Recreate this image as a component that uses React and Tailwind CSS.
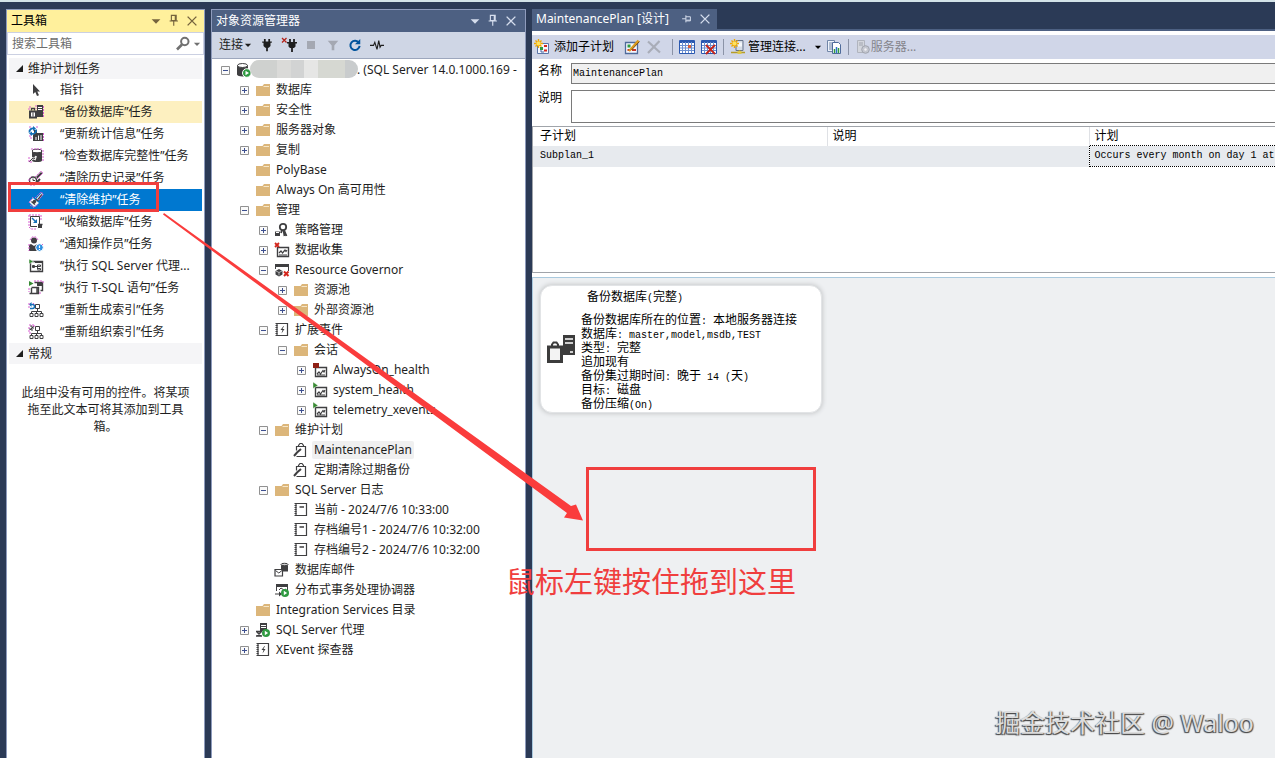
import React from "react";

const D = "#3f3f41";
const M = "#d65fd0";

function Svg({ size = 16, children }) {
  return (
    <svg width={size} height={size} viewBox="0 0 16 16" fill="none" className="shrink-0" aria-hidden="true">
      {children}
    </svg>
  );
}

const Fringe = ({ d }) => <path d={d} stroke={M} strokeWidth="1" strokeDasharray="2 1" />;

const Tree3 = () => (
  <path d="M7.500 2.500h4v4h-4zM9.500 6.500v3M3.500 11.500v-2h10v2M8.500 9.500v2M2 11.500h3v3H2zM7 11.500h3v3H7zM12 11.500h3v3h-3z" stroke={D} />
);

const icons = {
  pointer: <path d="M5 2v10l2.300-2 1.700 4 2-.8-1.700-3.800H12z" fill={D} />,
  backup: (
    <>
      <path d="M9 1h6v12H9z" fill={D} />
      <path d="M10 3.500h4M10 5.500h4" stroke="#fff" />
      <path d="M2 7.500h6v6H2z" fill="#fff" stroke={D} strokeWidth="2" />
      <path d="M3.500 6.500V4.500h3v2" stroke={D} strokeWidth="1.300" />
      <path d="M4.500 8.500h1v4h-1z" fill={D} />
      <Fringe d="M1 6V3h2M8 1v4M15.500 2v11" />
    </>
  ),
  stats: (
    <>
      <path d="M6 7V4h3v3h6v8H5V9" fill={D} />
      <path d="M8 14v-3M10.500 14V9.500M13 14v-5" stroke="#fff" />
      <path d="M1.500 6.500A3.500 3.500 0 0 1 6 2.500M8 3.500a3.500 3.500 0 0 1-5 4" stroke="#1471b8" strokeWidth="1.800" />
      <path d="M5 0l3 2.500L5 5zM4 10L1 7.500 4 5.500z" fill="#1471b8" />
      <Fringe d="M1 1h2M8 1h2M1 10h2v4M15.500 7v8" />
    </>
  ),
  check: (
    <>
      <path d="M4 3.500v9c0 2 10 2 10 0v-9" fill={D} />
      <ellipse cx="9" cy="3" rx="5" ry="1.800" fill="#fff" stroke={D} />
      <path d="M1 14l4-4 2 1 1-3" stroke="#eee" strokeWidth="2" />
      <path d="M1 14l4-4 2 .5" stroke={D} />
      <Fringe d="M3 1h12M1 9v5h4M15 2v12" />
    </>
  ),
  history: (
    <>
      <path d="M8 7l5-5 1.500 1.500-5 5z" fill={D} />
      <circle cx="5" cy="10.500" r="3.500" fill="#fff" stroke={D} strokeWidth="1.400" />
      <path d="M5 8.500v2h2" stroke={D} />
      <path d="M9 12l3-3" stroke={D} strokeWidth="2" />
      <Fringe d="M7 7l6-6 2 2-6 6M1 14V9l3-3M2 15h6l4-4" />
    </>
  ),
  broom: (
    <>
      <path d="M8 7l5.500-6L15 2.500 10 9z" fill="#f5f5f5" />
      <path d="M5 6l6 5-5 4-5-5z" fill="#f5f5f5" />
      <path d="M10 7.500l4-5" stroke={D} strokeWidth="1.300" />
      <path d="M3.500 9.500l3.500 3M8 7l2.500 2" stroke={D} strokeWidth="1.500" />
      <circle cx="6.500" cy="9.500" r="1.800" fill={D} />
      <Fringe d="M7 6l6-6 2.500 2-5 6M1 11l4-6M2 13l4 2.500 4-3" />
    </>
  ),
  shrink: (
    <>
      <path d="M2.500 2.500h9v10h-9z" fill="#fff" stroke={D} />
      <path d="M4 4l4 4" stroke="#1471b8" strokeWidth="1.500" />
      <path d="M9 5v4H5z" fill="#1471b8" />
      <path d="M9.500 10.500h5v4h-5z" fill={D} stroke="#fff" />
      <path d="M10 10.500h4.500" stroke={D} strokeWidth="1.500" />
      <Fringe d="M1 1h12v6M1 1v12l2 2h5" />
    </>
  ),
  operator: (
    <>
      <circle cx="6" cy="4.500" r="3" fill={D} />
      <path d="M1 9l2-1 3 2 3-2 1 1v6H1z" fill={D} />
      <circle cx="11.500" cy="11.500" r="3.800" fill="#2d8fe0" stroke="#fff" />
      <path d="M11.500 9.500v2.500M11.500 13v1" stroke="#fff" strokeWidth="1.200" />
      <Fringe d="M2 4l2-3h4l2 3M1 8V15M14 8l1 1" />
    </>
  ),
  agentJob: (
    <>
      <path d="M2.500 3.500h12v10h-12z" fill="#fff" stroke={D} strokeWidth="1.400" />
      <path d="M7 3h8v2H7z" fill={D} />
      <path d="M4 8.500h5M9.500 7v4.500M9.500 7h3v1.500h-3M9.500 10.500h3V12h-3M4.500 7.500h2v2h-2z" stroke={D} />
      <path d="M1 1l4.500 2.500L1 6z" fill="#388a34" stroke="#fff" strokeWidth=".5" />
    </>
  ),
  tsql: (
    <>
      <path d="M6.500 2.500h8v8h-2" stroke={D} strokeWidth="1.400" />
      <path d="M9 3h6v3H9z" fill={D} />
      <path d="M3.500 7.500h7v6h-7M3.500 13.500V8M9 7v7M1.500 13.500h5" stroke={D} strokeWidth="1.400" />
      <path d="M1 1l4.500 2.500L1 6z" fill="#388a34" />
      <Fringe d="M6 1h9v3M1 8v4M12 14v-3" />
    </>
  ),
  rebuild: (
    <>
      <Tree3 />
      <path d="M2 2.500h2.500a2 2 0 0 1 0 4H2" stroke="#1471b8" strokeWidth="1.500" />
      <path d="M3.500 0L1 2.500 3.500 5z" fill="#1471b8" />
      <Fringe d="M1 1v6M5 1l2 2" />
    </>
  ),
  reorg: (
    <>
      <Tree3 />
      <path d="M2 2h2v2h2M2 6l4-4M1 5h3v2" stroke={D} />
      <Fringe d="M1 1h5M1 3v6h3M6 1v3" />
    </>
  ),
  folder: (
    <>
      <path d="M1 4h6.500L9 2h6v12H1z" fill="#dcb67a" />
      <path d="M8.500 4.500H14" stroke="#f6e6c8" />
    </>
  ),
  server: (
    <>
      <path d="M1 3v9.500C1 15 12 15 12 12.500V3" fill={D} />
      <ellipse cx="6.500" cy="3.500" rx="5" ry="2" fill="#fff" stroke={D} />
      <circle cx="10.800" cy="11" r="4.300" fill="#2f9a41" stroke="#fff" />
      <path d="M9.500 8.800l3.500 2.200-3.500 2.200z" fill="#fff" />
    </>
  ),
  policy: (
    <>
      <circle cx="9" cy="5" r="3.200" stroke={D} strokeWidth="1.800" />
      <path d="M8 8l-1 3M10 8l2.500 6M9.500 8l1 6" stroke={D} strokeWidth="1.800" />
      <path d="M1 9.500h5V14H1z" fill={D} />
      <path d="M2 10.500h3" stroke="#fff" />
    </>
  ),
  collect: (
    <>
      <path d="M3.500 5.500h11v9h-11z" fill="#fff" stroke={D} strokeWidth="1.400" />
      <path d="M5 11l2-2 1.500 2L11 8l1 1.500 1-1.500M5 13h8" stroke={D} strokeWidth="1.200" />
      <path d="M1 1l4 4M5 1L1 5" stroke="#d3261c" strokeWidth="1.800" />
    </>
  ),
  governor: (
    <>
      <path d="M1 2h14v3H1z" fill={D} />
      <path d="M1.500 4v3M14.500 4v5" stroke={D} />
      <path d="M5 7l3.500 2v3.500L5 14.500l-3.500-2V9z" fill={D} />
      <path d="M5 10.500l3-1.500M5 10.500v3M5 10.500L2 9" stroke="#fff" strokeWidth=".6" />
      <path d="M10 9.500l4.500 4.500M14.500 9.500L10 14" stroke="#d3261c" strokeWidth="2" />
    </>
  ),
  event: (
    <>
      <path d="M3 1.500h10.500v12H3z" fill="#fff" stroke={D} strokeWidth="1.200" />
      <path d="M2.500 1v13" stroke={D} strokeWidth="2" strokeDasharray="1 1" />
      <path d="M9.500 4L6.500 8h2L7.500 11.500l3-4.500h-2L10 4z" fill={D} />
    </>
  ),
  sessionStop: (
    <>
      <path d="M3.500 5.500h11v9h-11z" fill="#fff" stroke={D} strokeWidth="1.400" />
      <path d="M5 12l2-2 1.500 2L11 8.500l1 1.500 1-2M5 13h8" stroke={D} strokeWidth="1.200" />
      <path d="M1 1h6v5H1z" fill="#8f2015" />
    </>
  ),
  sessionRun: (
    <>
      <path d="M3.500 5.500h11v9h-11z" fill="#fff" stroke={D} strokeWidth="1.400" />
      <path d="M5 12l2-2 1.500 2L11 8.500l1 1.500 1-2M5 13h8" stroke={D} strokeWidth="1.200" />
      <path d="M1 0l5 3.500L1 6.500z" fill="#388a34" stroke="#fff" strokeWidth=".4" />
    </>
  ),
  plan: (
    <>
      <path d="M3.500 8.500v-4h9v10h-9" stroke={D} strokeWidth="1.200" />
      <path d="M5.500 5V3.500L7 1.500h2l1.500 2V5" stroke={D} strokeWidth="1.200" />
      <path d="M1 14l3-3.500L8 7" stroke={D} strokeWidth="2" />
    </>
  ),
  log: (
    <>
      <path d="M3 1.500h10.500v12H3z" fill="#fff" stroke={D} strokeWidth="1.200" />
      <path d="M2.500 1v13" stroke={D} strokeWidth="2" strokeDasharray="1 1" />
      <path d="M6.500 5h4.500" stroke={D} strokeWidth="1.500" />
    </>
  ),
  mail: (
    <>
      <path d="M7 2.500v7h7v-7" fill={D} />
      <ellipse cx="10.500" cy="2.500" rx="3.500" ry="1.200" fill="#ccc" stroke={D} />
      <path d="M1 7.500h7.500V14H1z" fill="#fff" stroke={D} strokeWidth="1.200" />
      <path d="M1.500 8.500l3.300 2.500L8 8.500" stroke={D} />
    </>
  ),
  dtc: (
    <>
      <path d="M2 2h12v3H2z" fill={D} />
      <path d="M2.500 5v4M13.500 5v4M5 8l2-2 3 2 2-1" stroke={D} />
      <path d="M1 11.500h4V9.500L8 12l-3 2.500v-2H1z" fill={D} />
      <circle cx="11" cy="11" r="4" fill="#2f9a41" />
      <path d="M9.800 8.800l3.300 2.200-3.300 2.200z" fill="#fff" />
    </>
  ),
  agent: (
    <>
      <path d="M5 1h7v8H5z" fill={D} />
      <path d="M6 3.500h5M6 5.500h5" stroke="#fff" />
      <path d="M1 9.500h6M1 14h6M2 10l4 4M6 10l-4 4" stroke={D} strokeWidth="1.500" />
      <circle cx="11" cy="11" r="4" fill="#2f9a41" />
      <path d="M9.800 8.800l3.300 2.200-3.300 2.200z" fill="#fff" />
    </>
  ),
  caret: <path d="M3 6h10l-5 5z" fill="currentColor" />,
  pin: <path d="M5 1.500h5.500v6H5zM9.500 2v5.500M3 8h9.500M7.700 8v5.500" stroke="currentColor" strokeWidth="1.300" />,
  pinSide: <path d="M6.500 5h6v5.500h-6M6.500 3v9.500M1.500 7.700h5M7 9.500h5.500" stroke="currentColor" strokeWidth="1.300" />,
  close: <path d="M3 3l10 10M13 3L3 13" stroke="currentColor" strokeWidth="1.600" />,
  search: (
    <>
      <circle cx="9.800" cy="5.500" r="3.700" stroke="#717171" strokeWidth="2" />
      <path d="M7 8.500L2 13.500" stroke="#717171" strokeWidth="2.600" />
    </>
  ),
  plug: (
    <>
      <path d="M5.500 1v4M10.500 1v4M8 9v6" stroke="#1e1e1e" strokeWidth="2" />
      <path d="M2.500 4h11v1.500H12V9l-2 2H6L4 9V5.500H2.500z" fill="#1e1e1e" />
    </>
  ),
  unplug: (
    <>
      <path d="M9 2v3M13 2v3M11 9v6" stroke="#1e1e1e" strokeWidth="1.800" />
      <path d="M6 5h10v1.500h-1.500v3L13 11H9L7.500 9.500v-3H6z" fill="#1e1e1e" />
      <path d="M1 1l4.500 4.500M5.500 1L1 5.500" stroke="#b3241b" strokeWidth="1.300" />
    </>
  ),
  stop: <path d="M4 4h8v8H4z" fill="#a4a8b2" />,
  filter: <path d="M2 3h12L9.500 8.500V14h-3V8.500z" fill="#a4a8b2" />,
  refresh: (
    <>
      <path d="M12.500 5.500A5.300 5.300 0 1 0 13.300 9" stroke="#00539c" strokeWidth="2.300" />
      <path d="M14 1v6H8z" fill="#00539c" />
    </>
  ),
  pulse: <path d="M0 8.500h4L5.500 5 8 13l2-10 1.500 7.500 1.200-2H16" stroke="#1e1e1e" strokeWidth="1.300" />,
  addPlan: (
    <>
      <path d="M3.500 4.500h11v10h-11z" fill="#f4f7ff" stroke="#5b76a8" />
      <path d="M6 8h3v3H6z" fill="#2f9a41" />
      <path d="M10 7h3M10 11.500h3" stroke="#d3261c" strokeWidth="2" />
      <path d="M7 11v2h3" stroke="#4465a0" />
      <path d="M4.500 0v9M0 4.500h9M1.500 1.500l6 6M7.500 1.500l-6 6" stroke="#f0a800" strokeWidth="1.400" />
      <circle cx="4.500" cy="4.500" r="2" fill="#ffe25e" />
    </>
  ),
  editPlan: (
    <>
      <path d="M1.500 3.500h12v11h-12z" fill="#f4f7ff" stroke="#4f6b9b" strokeWidth="1.300" />
      <path d="M3.500 5.500h3v3h-3z" fill="#2f9a41" />
      <path d="M8 11h4M3.500 11h3" stroke="#c73427" strokeWidth="2" />
      <path d="M14.500 1.500L7 10l-2 2" stroke="#d99a1e" strokeWidth="2.400" />
      <path d="M15.500 2.500l-8 8.500" stroke="#7a4c12" />
    </>
  ),
  remove: <path d="M2 2.500l12 11M13.500 2L2 14" stroke="#a9adb8" strokeWidth="2.200" />,
  grid: (
    <>
      <path d="M.5 1.500h15v13H.5z" fill="#fff" stroke="#2a58b0" />
      <path d="M1 3h14" stroke="#2a58b0" strokeWidth="2" />
      <path d="M3.500 3v11M6.500 3v11M9.500 3v11M12.500 3v11M1 6.500h14M1 9h14M1 11.500h14" stroke="#6b8fd0" />
      <path d="M9 6h3v3H9z" fill="#d9603b" />
    </>
  ),
  gridDel: (
    <>
      <path d="M.5 1.500h15v13H.5z" fill="#fff" stroke="#2a58b0" />
      <path d="M1 3h14" stroke="#2a58b0" strokeWidth="2" />
      <path d="M3.500 3v11M6.500 3v11M9.500 3v11M12.500 3v11M1 6.500h14M1 9h14M1 11.500h14" stroke="#6b8fd0" />
      <path d="M5 6l9 9M14 6l-9 9" stroke="#c4231a" strokeWidth="1.800" />
    </>
  ),
  conn: (
    <>
      <path d="M6 1.500h7v10H6z" fill="#d5dbe5" stroke="#66738a" />
      <path d="M8 3.500h4v4H8z" fill="#f5f7fb" />
      <path d="M1 13.500h14M9.500 11v3" stroke="#b59c28" strokeWidth="1.500" />
      <path d="M7.500 12h4v3h-4z" fill="#dcc74a" />
      <path d="M4.500 0v9M0 4.500h9M1.500 1.500l6 6M7.500 1.500l-6 6" stroke="#f0a800" strokeWidth="1.400" />
      <circle cx="4.500" cy="4.500" r="2" fill="#ffe25e" />
    </>
  ),
  report: (
    <>
      <path d="M1.500 1.500h7v11h-7z" fill="#eef3fb" stroke="#7186a8" />
      <path d="M3 4h3M3 6h3M3 8h3M3 10h3" stroke="#7186a8" />
      <path d="M6.500 3.500h6l2 2v9h-8z" fill="#fff" stroke="#4f6b9b" />
      <path d="M8.500 14v-4" stroke="#2f9a41" strokeWidth="1.500" />
      <path d="M10.500 14V8" stroke="#2a72c8" strokeWidth="1.500" />
      <path d="M12.500 14v-5" stroke="#2f9a41" strokeWidth="1.500" />
    </>
  ),
  serverGray: (
    <>
      <path d="M2.500 1.500h7v12h-7z" fill="#d3d6dd" stroke="#b0b4be" />
      <path d="M4 4h4M4 6h4" stroke="#a0a4ae" />
      <circle cx="10.500" cy="10.500" r="3.800" fill="#c4c7d0" stroke="#a0a4ae" />
      <circle cx="10.500" cy="10.500" r="1.200" fill="#f0f0f4" />
    </>
  ),
};

function Icon({ name, size }) {
  return <Svg size={size}>{icons[name]}</Svg>;
}

function IconButton({ name, label, size = 16, className = "" }) {
  return (
    <button type="button" aria-label={label} className={`flex h-5 shrink-0 items-center justify-center ${className}`}>
      <Icon name={name} size={size} />
    </button>
  );
}

/* Sets half-width characters in a monospaced face beside full-width Chinese. */
function Mono({ children }) {
  return children.split(/([\x20-\x7e]+)/).map((part, i) =>
    /^[\x20-\x7e]+$/.test(part) ? (
      <span key={i} className="font-['Liberation_Mono',monospace] text-[10px] whitespace-pre">{part}</span>
    ) : (
      part
    )
  );
}

const tools = [
  ["pointer", "指针"],
  ["backup", "“备份数据库”任务"],
  ["stats", "“更新统计信息”任务"],
  ["check", "“检查数据库完整性”任务"],
  ["history", "“清除历史记录”任务"],
  ["broom", "“清除维护”任务"],
  ["shrink", "“收缩数据库”任务"],
  ["operator", "“通知操作员”任务"],
  ["agentJob", "“执行 SQL Server 代理..."],
  ["tsql", "“执行 T-SQL 语句”任务"],
  ["rebuild", "“重新生成索引”任务"],
  ["reorg", "“重新组织索引”任务"],
];

function Category({ children }) {
  return (
    <button type="button" className="flex h-[21px] w-full items-center gap-1 bg-[#f5f5f7] pl-1.5 text-left">
      <svg width="9" height="8" viewBox="0 0 9 8" aria-hidden="true"><path d="M8 0v7H1z" fill="#1e1e1e" /></svg>
      {children}
    </button>
  );
}

function Toolbox() {
  return (
    <section className="flex w-[199px] shrink-0 flex-col border border-b-0 border-[#8e9bbc] bg-white">
      <header className="flex h-[22px] items-center bg-[#fff09c] pr-1 pl-1 text-black">
        <h2 className="flex-1">工具箱</h2>
        <div className="flex items-center gap-0.5 text-[#75633d]">
          <IconButton name="caret" label="窗口位置" size={14} className="w-4" />
          <IconButton name="pin" label="自动隐藏" size={14} className="w-4" />
          <IconButton name="close" label="关闭" size={14} className="w-4" />
        </div>
      </header>
      <div className="flex h-[23px] items-center border border-[#cbd0e2] pl-1">
        <input aria-label="搜索工具箱" placeholder="搜索工具箱" className="min-w-0 flex-1 bg-transparent outline-none placeholder:text-[#6d6d6d]" />
        <IconButton name="search" label="搜索" className="w-4" />
        <IconButton name="caret" label="搜索选项" size={10} className="w-3 text-[#717171]" />
      </div>
      <div className="px-0.5 pt-[3px]">
        <Category>维护计划任务</Category>
        <ul>
          {tools.map(([icon, text]) => {
            const tone = icon === "broom" ? "bg-[#0078d0] text-white" : icon === "backup" ? "bg-[#fdf0c0]" : "";
            return (
              <li key={icon}>
                <button type="button" className={`flex h-[22px] w-full items-center gap-4 pl-[19px] text-left whitespace-nowrap ${tone}`}>
                  <Icon name={icon} />
                  {text}
                </button>
              </li>
            );
          })}
        </ul>
        <Category>常规</Category>
        <p className="px-2.5 pt-5 text-center leading-[17px]">此组中没有可用的控件。将某项拖至此文本可将其添加到工具箱。</p>
      </div>
    </section>
  );
}

const tree = [
  {
    i: "server", open: true, hidden: true, t: ". (SQL Server 14.0.1000.169 -", c: [
      { i: "folder", x: true, t: "数据库" },
      { i: "folder", x: true, t: "安全性" },
      { i: "folder", x: true, t: "服务器对象" },
      { i: "folder", x: true, t: "复制" },
      { i: "folder", t: "PolyBase" },
      { i: "folder", t: "Always On 高可用性" },
      {
        i: "folder", open: true, t: "管理", c: [
          { i: "policy", x: true, t: "策略管理" },
          { i: "collect", x: true, t: "数据收集" },
          { i: "governor", open: true, t: "Resource Governor", c: [
            { i: "folder", x: true, t: "资源池" },
            { i: "folder", x: true, t: "外部资源池" },
          ] },
          { i: "event", open: true, t: "扩展事件", c: [
            { i: "folder", open: true, t: "会话", c: [
              { i: "sessionStop", x: true, t: "AlwaysOn_health" },
              { i: "sessionRun", x: true, t: "system_health" },
              { i: "sessionRun", x: true, t: "telemetry_xevents" },
            ] },
          ] },
          { i: "folder", open: true, t: "维护计划", c: [
            { i: "plan", t: "MaintenancePlan", current: true },
            { i: "plan", t: "定期清除过期备份" },
          ] },
          { i: "folder", open: true, t: "SQL Server 日志", c: [
            { i: "log", t: "当前 - 2024/7/6 10:33:00" },
            { i: "log", t: "存档编号1 - 2024/7/6 10:32:00" },
            { i: "log", t: "存档编号2 - 2024/7/6 10:32:00" },
          ] },
          { i: "mail", t: "数据库邮件" },
          { i: "dtc", t: "分布式事务处理协调器" },
        ],
      },
      { i: "folder", t: "Integration Services 目录" },
      { i: "agent", x: true, t: "SQL Server 代理" },
      { i: "event", x: true, t: "XEvent 探查器" },
    ],
  },
];

function Expander({ open }) {
  return (
    <button type="button" aria-label={open ? "折叠" : "展开"} className="size-[9px] shrink-0">
      <svg width="9" height="9" viewBox="0 0 9 9" fill="none" aria-hidden="true">
        <path d="M.5.5h8v8h-8z" fill="#fafafa" stroke="#919191" />
        <path d={open ? "M2 4.500h5" : "M2 4.500h5M4.500 2v5"} stroke="#3d4f8f" />
      </svg>
    </button>
  );
}

function Nodes({ items, nested }) {
  return (
    <ul className={nested ? "pl-[19px]" : ""}>
      {items.map((n) => (
        <li key={n.t}>
          <div className="flex h-5 items-center whitespace-nowrap">
            {n.open || n.x ? <Expander open={n.open} /> : <span className="w-[9px] shrink-0" />}
            <span className="ml-1.5 flex"><Icon name={n.i} /></span>
            {n.hidden && (
              <span className="-ml-0.5 flex h-[18px] w-[108px] shrink-0 self-start overflow-hidden rounded-[9px]">
                <span className="flex-2 bg-[#cfd1cf]" />
                <span className="flex-1 bg-[#dadad8]" />
                <span className="flex-1 bg-[#d2d3d3]" />
                <span className="flex-1 bg-[#e6e6e5]" />
                <span className="flex-2 bg-[#d6d8d2]" />
                <span className="flex-1 bg-[#c9cccd]" />
              </span>
            )}
            <span className={`rounded-xs ${n.hidden ? "-ml-px" : "ml-[3px] px-0.5"} ${n.current ? "bg-[#f0f0f0] leading-[18px]" : ""}`}>{n.t}</span>
          </div>
          {n.c && <Nodes items={n.c} nested />}
        </li>
      ))}
    </ul>
  );
}

function Explorer() {
  return (
    <section className="flex w-[315px] shrink-0 flex-col overflow-hidden border border-b-0 border-[#8e9bbc] bg-white">
      <header className="flex h-[22px] items-center bg-[#4d6082] pr-1.5 pl-1 text-white">
        <h2 className="flex-1">对象资源管理器</h2>
        <div className="flex items-center gap-0.5 text-[#d5dded]">
          <IconButton name="caret" label="窗口位置" size={14} className="w-4" />
          <IconButton name="pin" label="自动隐藏" size={14} className="w-4" />
          <IconButton name="close" label="关闭" size={14} className="w-4" />
        </div>
      </header>
      <div className="flex h-[26px] items-center gap-1.5 bg-[#cfd6e5] pl-[7px]">
        <button type="button" className="flex items-center">
          连接
          <Icon name="caret" size={10} />
        </button>
        <IconButton name="plug" label="连接对象资源管理器" size={14} className="w-4" />
        <IconButton name="unplug" label="断开连接" className="w-4" />
        <IconButton name="stop" label="停止" className="w-4" />
        <IconButton name="filter" label="筛选" size={14} className="w-4" />
        <IconButton name="refresh" label="刷新" size={14} className="w-4" />
        <IconButton name="pulse" label="活动监视器" size={14} className="w-4" />
      </div>
      <div className="flex-1 border-t border-[#9da7bd] pt-px pl-[9px]">
        <Nodes items={tree} />
      </div>
    </section>
  );
}

const Divider = () => <span className="h-4 w-px bg-[#8b93a7]" />;

const cardLines = [
  "备份数据库所在的位置: 本地服务器连接",
  "数据库: master,model,msdb,TEST",
  "类型: 完整",
  "追加现有",
  "备份集过期时间: 晚于 14 (天)",
  "目标: 磁盘",
  "备份压缩(On)",
];

function TaskCard() {
  return (
    <article className="absolute top-[7px] left-[7px] w-[282px] rounded-xl border border-[#e2e4e6] bg-white pt-1 pr-2 pb-px pl-1.5 text-black shadow-[0_0_4px_1px_#c9cbcd]">
      <h3 className="pl-10 leading-[14px]"><Mono>备份数据库(完整)</Mono></h3>
      <div className="flex items-start gap-1.5 pt-[7px]">
        <svg width="28" height="28" viewBox="0 0 28 28" fill="none" className="mt-[22px] shrink-0" aria-hidden="true">
          <path d="M16 0h12v20H16z" fill="#3c3c3c" />
          <path d="M18 4h8M18 8h8M23 17h3" stroke="#fff" strokeWidth="1.500" />
          <path d="M1.500 12h13v14.500h-13z" fill="#f3f3f3" stroke="#3c3c3c" strokeWidth="3" />
          <path d="M5 11V9.500L6.500 7.500h3L11 9.500V11" stroke="#3c3c3c" strokeWidth="2" />
        </svg>
        <div className="leading-[14px]">
          {cardLines.map((l) => (
            <p key={l} className="h-[14px] whitespace-nowrap"><Mono>{l}</Mono></p>
          ))}
        </div>
      </div>
    </article>
  );
}

function Designer() {
  return (
    <main className="flex min-w-0 flex-1 flex-col">
      <div className="flex border-b-2 border-[#4d6082]">
        <div className="flex h-5 items-center bg-[#4d6082] pr-1 pl-1 text-white">
          <span>MaintenancePlan [设计]</span>
          <IconButton name="pinSide" label="固定选项卡" size={12} className="ml-2.5 w-4 text-[#d5dded]" />
          <IconButton name="close" label="关闭选项卡" size={14} className="ml-0.5 w-4 text-[#d5dded]" />
        </div>
      </div>
      <div className="flex flex-1 flex-col bg-white pt-1">
        <div className="flex h-6 items-center gap-1.5 overflow-hidden bg-[#d0d6e8] pl-0.5 whitespace-nowrap text-black">
          <button type="button" className="flex items-center gap-1"><Icon name="addPlan" />添加子计划</button>
          <div className="flex gap-1.5 px-1">
            <IconButton name="editPlan" label="编辑子计划" className="w-4" />
            <IconButton name="remove" label="删除子计划" className="w-4" />
          </div>
          <Divider />
          <IconButton name="grid" label="计划" className="w-4" />
          <IconButton name="gridDel" label="删除计划" className="w-4" />
          <Divider />
          <button type="button" className="flex items-center gap-0.5"><Icon name="conn" />管理连接...</button>
          <div className="flex gap-0.5">
            <IconButton name="caret" label="连接选项" size={10} className="w-3" />
            <IconButton name="report" label="报告和日志记录" className="w-4" />
          </div>
          <Divider />
          <button type="button" className="flex items-center text-[#85858c]"><Icon name="serverGray" />服务器...</button>
        </div>
        <div className="flex pt-1 pl-1.5 text-black">
          <label htmlFor="plan-name" className="w-[33px] leading-[15px]">名称</label>
          <input id="plan-name" readOnly defaultValue="MaintenancePlan" className="h-[21px] min-w-0 flex-1 border border-r-0 border-[#7a7a7a] bg-[#f0f0f0] px-px font-['Liberation_Mono',monospace] text-[10px] outline-none" />
        </div>
        <div className="flex pt-1.5 pl-1.5 text-black">
          <label htmlFor="plan-note" className="w-[33px] leading-[15px]">说明</label>
          <textarea id="plan-note" className="h-[33px] min-w-0 flex-1 resize-none border border-r-0 border-[#7a7a7a] outline-none" />
        </div>
        <div className="mt-[3px] h-[147px] overflow-hidden border-y border-l border-[#a0a4aa]">
          <table className="w-full table-fixed border-collapse text-left text-black">
            <colgroup>
              <col className="w-[294px]" />
              <col className="w-[262px]" />
              <col />
            </colgroup>
            <thead>
              <tr className="h-[18px]">
                <th className="border-r border-[#dfe1e5] p-0 pl-[7px] leading-[18px] font-normal">子计划</th>
                <th className="border-r border-[#dfe1e5] p-0 pl-[5px] leading-[18px] font-normal">说明</th>
                <th className="p-0 pl-[5px] leading-[18px] font-normal">计划</th>
              </tr>
            </thead>
            <tbody>
              <tr className="h-[21px] bg-[#e7eaee] font-['Liberation_Mono',monospace] text-[10px] leading-[18px]">
                <td className="p-0 pl-[7px]">Subplan_1</td>
                <td className="p-0" />
                <td className="overflow-hidden border border-r-0 border-dotted border-black p-0 pl-[5px] whitespace-nowrap">Occurs every month on day 1 at</td>
              </tr>
            </tbody>
          </table>
        </div>
        <div className="relative mt-1 flex-1 border-t border-l border-[#a9c9de] bg-[#eef0f2]">
          <TaskCard />
          <div className="absolute top-[189px] left-[53px] h-[84px] w-[230px] border-[3px] border-[#f03e3e]" />
          <p className="absolute top-[284px] left-[-27px] text-[29px] leading-10 whitespace-nowrap text-[#f03e3e]">鼠标左键按住拖到这里</p>
          <p className="absolute right-[21px] bottom-[18px] text-[25px] leading-9 whitespace-nowrap text-[#dcdcdc] [text-shadow:-1px_1px_1px_#4a4a4a,1px_1px_1px_#4a4a4a]">掘金技术社区 @ Waloo</p>
        </div>
      </div>
    </main>
  );
}

export default function App() {
  return (
    <div className="relative flex min-h-screen flex-col overflow-hidden border-t-2 border-[#d3e3e8] bg-[#2b3a56] font-['Noto_Sans','Noto_Sans_CJK_SC',sans-serif] text-xs text-[#1e1e1e]">
      <div className="flex flex-1 pt-[7px] pl-1.5">
        <Toolbox />
        <div className="w-1.5 shrink-0" />
        <Explorer />
        <div className="w-1.5 shrink-0" />
        <Designer />
      </div>
      <div className="pointer-events-none absolute top-[180px] left-2 h-[30px] w-[151px] border-[3px] border-[#f03e3e]" />
      <svg width="422" height="310" viewBox="0 0 422 310" className="pointer-events-none absolute top-[211px] left-[162px]" aria-hidden="true">
        <path d="M2 0L409 293l5-1.500 7 16-19-3 3-4.500L1 1.500z" fill="#fa3c3c" />
      </svg>
    </div>
  );
}
